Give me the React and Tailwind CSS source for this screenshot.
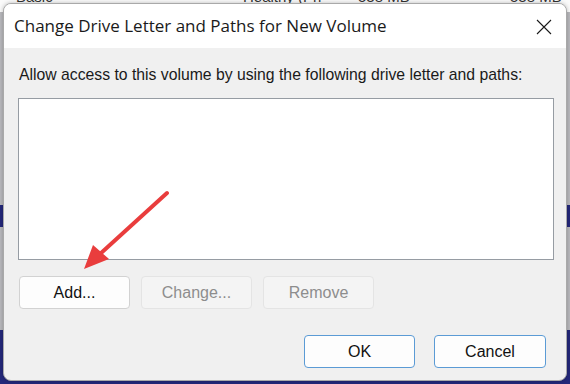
export default function App() {
  const sans = { fontFamily: '"Liberation Sans", Arial, sans-serif' };
  return (
    <div className="relative w-[570px] h-[384px] overflow-hidden bg-[#b9b9bd]" style={sans}>
      {/* background window remnants */}
      <div className="absolute left-0 top-0 w-[570px] h-[12px] bg-[#fafafa] overflow-hidden">
        <div className="absolute top-[-12px] left-[16px] text-[15px] leading-[18px] text-[#333]">Basic</div>
        <div className="absolute top-[-12px] left-[243px] text-[15px] leading-[18px] text-[#333]">Healthy (Pri</div>
        <div className="absolute top-[-12px] left-[358px] text-[15px] leading-[18px] text-[#333]">538 MB</div>
        <div className="absolute top-[-12px] left-[510px] text-[15px] leading-[18px] text-[#333]">538 MB</div>
      </div>
      <div className="absolute left-0 top-[205px] w-[570px] h-[22px] bg-[#24287a]" />
      <div className="absolute left-0 top-[330px] w-[570px] h-[54px] bg-[#24287a]" />

      {/* dialog */}
      <div className="absolute left-[3px] top-[3px] w-[564px] h-[378px] rounded-[8px] border border-[#a9a9a9] overflow-hidden flex flex-col bg-[#f0f0f0] shadow-[0_0_4px_rgba(0,0,0,0.25)]">
        <div className="h-[44px] shrink-0 bg-white flex items-center justify-between pl-[10px] pr-[14px]">
          <span
            className="text-[17px] text-[#1a1a1a] -mt-[1px]"
            style={{ fontFamily: '"Open Sans", "Noto Sans", sans-serif' }}
          >
            Change Drive Letter and Paths for New Volume
          </span>
          <svg width="16" height="16" viewBox="0 0 16 16" className="mt-[1px]">
            <path d="M1 1 L15 15 M15 1 L1 15" stroke="#1a1a1a" strokeWidth="1.1" />
          </svg>
        </div>
        <div className="flex-1 flex flex-col pl-[14px] pr-[12px] pt-[18px]">
          <div className="text-[15.75px] text-[#1a1a1a] leading-[18px] pl-[1px]">
            Allow access to this volume by using the following drive letter and paths:
          </div>
          <div className="mt-[14px] h-[162px] bg-white border-[1.5px] border-[#969ca3]" />
          <div className="mt-[16px] flex gap-[11px] pl-[1px]">
            <button className="w-[111px] h-[33px] rounded-[4px] bg-[#fdfdfd] border border-[#d2d2d2] text-[16px] text-[#111]">
              Add...
            </button>
            <button className="w-[111px] h-[33px] rounded-[4px] bg-[#f4f4f4] border border-[#e4e4e4] text-[16px] text-[#8d8d8d]">
              Change...
            </button>
            <button className="w-[111px] h-[33px] rounded-[4px] bg-[#f4f4f4] border border-[#e4e4e4] text-[16px] text-[#8d8d8d]">
              Remove
            </button>
          </div>
          <div className="mt-[26px] flex justify-end gap-[19px] pr-[8px]">
            <button className="w-[111px] h-[33px] rounded-[4px] bg-[#fdfdfd] border border-[#5b9bd5] text-[16px] text-[#111]">
              OK
            </button>
            <button className="w-[112px] h-[33px] rounded-[4px] bg-[#fdfdfd] border border-[#5b9bd5] text-[16px] text-[#111]">
              Cancel
            </button>
          </div>
        </div>
      </div>

      {/* red annotation arrow */}
      <svg className="absolute left-0 top-0 pointer-events-none" width="570" height="384">
        <line x1="167" y1="193" x2="100" y2="254" stroke="#e93d3d" strokeWidth="4" strokeLinecap="round" />
        <polygon points="84,269 93,245 109,259" fill="#e93d3d" />
      </svg>
    </div>
  );
}
